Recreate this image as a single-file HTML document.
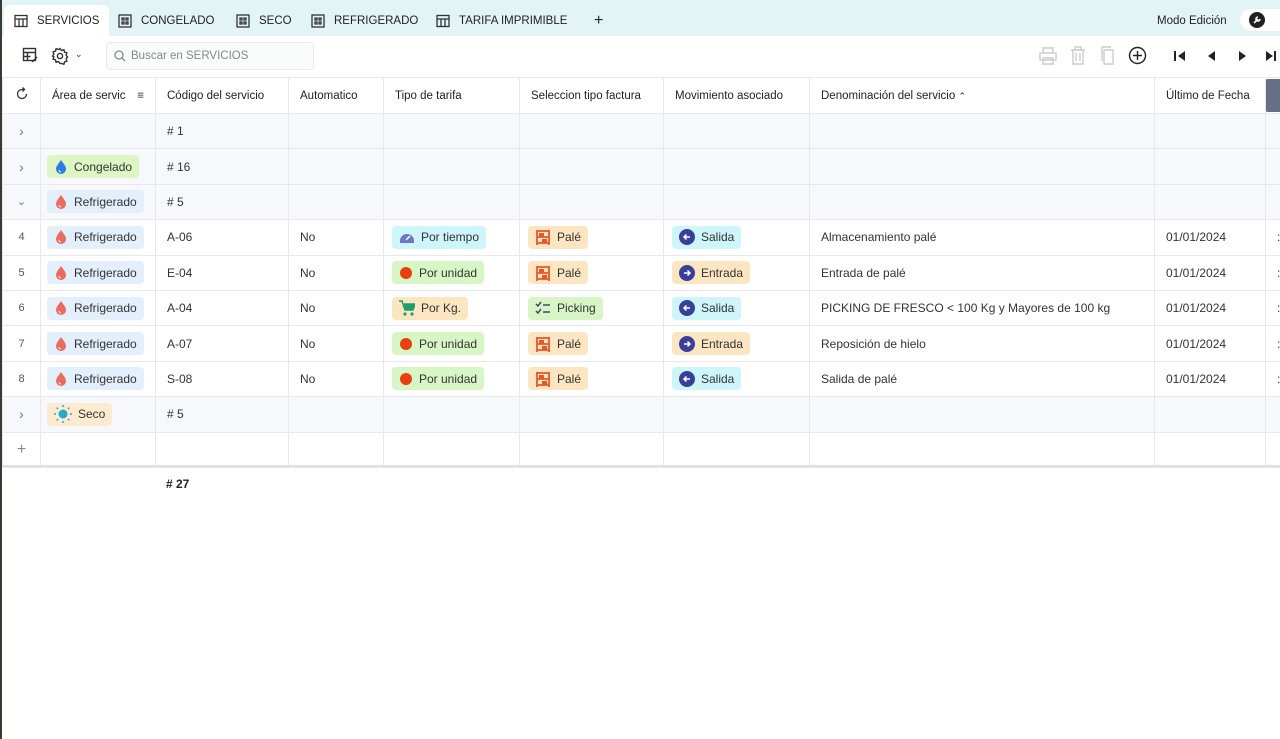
<!DOCTYPE html>
<html><head><meta charset="utf-8"><style>
*{box-sizing:border-box;margin:0;padding:0}
body{width:1280px;height:739px;overflow:hidden;background:#fff;font-family:"Liberation Sans",sans-serif;font-size:12px;color:#333;position:relative}
.tabs{position:absolute;left:0;top:0;width:1280px;height:36px;background:#e2f4f6}
.tab{position:absolute;top:5px;height:31px;display:flex;align-items:center;gap:9px;font-size:11.5px;color:#222}
.tab.active{background:#fff;border-radius:6px 6px 0 0;padding:0 10px;left:4px}
.lb{position:absolute;left:0;top:0;width:2px;height:739px;background:#3a3a30}
table{position:absolute;left:2px;top:77px;border-collapse:collapse;table-layout:fixed;width:1283px}
td{border:1px solid #e6e8eb;height:35.4px;padding:0 11px;white-space:nowrap;overflow:hidden;font-size:12px;color:#333}
tr.h td{height:36px;font-size:11.5px;color:#222}
tr.g td{background:#f6f8fb}
td.n{text-align:center;padding:0;color:#555;font-size:11px}
.p{display:inline-flex;align-items:center;gap:6px;height:23px;padding:0 7px;border-radius:4px;font-size:12px;color:#333;vertical-align:middle}
.p svg{flex:none}
.rf{background:#e3effa}.cg{background:#dcf7c4}.sc{background:#fdebd1}.cy{background:#cdf5fa}.gr{background:#d8f6c5}.or{background:#fce6c2}
</style></head><body>
<div class="tabs">
 <div class="tab active"><svg width="14" height="14" viewBox="0 0 14 14" fill="none" stroke="#333" stroke-width="1.3"><rect x="1" y="1.5" width="12" height="11"/><path d="M1 5h12M5 5v7.5M9 5v7.5"/></svg>SERVICIOS</div>
 <div class="tab" style="left:118px"><svg width="14" height="14" viewBox="0 0 14 14" fill="none" stroke="#333" stroke-width="1.3"><rect x="1" y="1" width="12" height="12"/><path d="M4 4h2v2H4zM8 4h2v2H8zM4 8h2v2H4zM8 8h2v2H8z"/></svg>CONGELADO</div>
 <div class="tab" style="left:236px"><svg width="14" height="14" viewBox="0 0 14 14" fill="none" stroke="#333" stroke-width="1.3"><rect x="1" y="1" width="12" height="12"/><path d="M4 4h2v2H4zM8 4h2v2H8zM4 8h2v2H4zM8 8h2v2H8z"/></svg>SECO</div>
 <div class="tab" style="left:311px"><svg width="14" height="14" viewBox="0 0 14 14" fill="none" stroke="#333" stroke-width="1.3"><rect x="1" y="1" width="12" height="12"/><path d="M4 4h2v2H4zM8 4h2v2H8zM4 8h2v2H4zM8 8h2v2H8z"/></svg>REFRIGERADO</div>
 <div class="tab" style="left:436px"><svg width="14" height="14" viewBox="0 0 14 14" fill="none" stroke="#333" stroke-width="1.3"><rect x="1" y="1.5" width="12" height="11"/><path d="M1 5h12M5 5v7.5M9 5v7.5"/></svg>TARIFA IMPRIMIBLE</div>
 <div class="tab" style="left:594px;font-size:16px">+</div>
 <div class="tab" style="left:1157px">Modo Edición</div>
 <div style="position:absolute;left:1240px;top:9px;width:40px;height:22px;background:#fff;border-radius:11px 0 0 11px"></div>
 <div style="position:absolute;left:1249px;top:12px;width:16px;height:16px;border-radius:50%;background:#222"></div>
 <svg style="position:absolute;left:1252px;top:15px" width="10" height="10" viewBox="0 0 10 10" fill="none" stroke="#fff" stroke-width="1.6"><path d="M2 8l4-4M6 2a2 2 0 1 0 2 2"/></svg>
</div>
<div class="lb"></div>
<svg style="position:absolute;left:22px;top:47px" width="17" height="17" viewBox="0 0 17 17" fill="none" stroke="#333" stroke-width="1.4"><rect x="1.5" y="1.5" width="12" height="12"/><path d="M1.5 5.5h12M1.5 9.5h7M5.5 5.5v8M10 15l5-5"/></svg>
<svg style="position:absolute;left:51px;top:47px" width="18" height="18" viewBox="0 0 18 18" fill="none" stroke="#333" stroke-width="1.4"><circle cx="9" cy="9" r="2.6"/><path d="M9 1.5l1.5 2 2.4-.8.6 2.4 2.4.7-.8 2.4 1.5 1.8-1.5 1.8.8 2.4-2.4.7-.6 2.4-2.4-.8L9 16.5l-1.5-2-2.4.8-.6-2.4-2.4-.7.8-2.4L1.5 9l1.4-1.8-.8-2.4 2.4-.7.6-2.4 2.4.8z"/></svg>
<div style="position:absolute;left:75px;top:49px;font-size:9px">⌄</div>
<div style="position:absolute;left:106px;top:42px;width:208px;height:28px;border:1px solid #e8eaec;border-radius:4px;background:#fafbfb;color:#888;font-size:11.5px;padding:7px 0 0 24px">Buscar en SERVICIOS</div>
<svg style="position:absolute;left:114px;top:50px" width="12" height="12" viewBox="0 0 12 12" fill="none" stroke="#888" stroke-width="1.3"><circle cx="5" cy="5" r="4"/><path d="M8 8l3 3"/></svg>
<svg style="position:absolute;left:1038px;top:47px" width="20" height="18" viewBox="0 0 20 18" fill="none" stroke="#ccc" stroke-width="1.4"><path d="M5 6V1h10v5M2 6h16v7H2zM5 11h10v6H5z"/></svg>
<svg style="position:absolute;left:1070px;top:46px" width="16" height="19" viewBox="0 0 16 19" fill="none" stroke="#ccc" stroke-width="1.4"><path d="M1 4h14M5 4V1h6v3M3 4v14h10V4M6 7v8M10 7v8"/></svg>
<svg style="position:absolute;left:1099px;top:46px" width="18" height="19" viewBox="0 0 18 19" fill="none" stroke="#ccc" stroke-width="1.4"><path d="M5 4h9v14H5zM3 15V1h9"/></svg>
<svg style="position:absolute;left:1128px;top:46px" width="19" height="19" viewBox="0 0 19 19" fill="none" stroke="#222" stroke-width="1.4"><circle cx="9.5" cy="9.5" r="8"/><path d="M9.5 5v9M5 9.5h9"/></svg>
<svg style="position:absolute;left:1173px;top:49px" width="14" height="14" viewBox="0 0 14 14" fill="#222"><rect x="1" y="2" width="2" height="10"/><path d="M12 2v10L5 7z"/></svg>
<svg style="position:absolute;left:1205px;top:49px" width="14" height="14" viewBox="0 0 14 14" fill="#222"><path d="M10 2v10L3 7z"/></svg>
<svg style="position:absolute;left:1235px;top:49px" width="14" height="14" viewBox="0 0 14 14" fill="#222"><path d="M4 2v10l7-5z"/></svg>
<svg style="position:absolute;left:1264px;top:49px" width="16" height="14" viewBox="0 0 16 14" fill="#222"><path d="M2 2v10l7-5z"/><rect x="10" y="2" width="2" height="10"/></svg>

<svg width="0" height="0" style="position:absolute"><defs>
<symbol id="drop" viewBox="0 0 14 16"><path d="M7 1C5 4 2 7 2 10a5 5 0 0 0 10 0C12 7 9 4 7 1z"/><path d="M5 11a2 2 0 0 0 2 2" stroke="#fff" stroke-width="1" fill="none"/></symbol>
<symbol id="sh" viewBox="0 0 16 16"><g fill="none" stroke="#e8572a" stroke-width="1.8"><path d="M2 1v15M14 1v15M2 2h12M2 8h12M2 14h12"/></g><rect x="4" y="4" width="5" height="4" fill="#e8572a"/><rect x="7" y="10" width="5" height="4" fill="#e8572a"/></symbol>
<symbol id="sal" viewBox="0 0 16 16"><circle cx="8" cy="8" r="8" fill="#3a3f9a"/><path d="M11 8H5M7.5 5.5L5 8l2.5 2.5" stroke="#fff" stroke-width="1.5" fill="none"/></symbol>
<symbol id="ent" viewBox="0 0 16 16"><circle cx="8" cy="8" r="8" fill="#3a3f9a"/><path d="M5 8h6M8.5 5.5L11 8l-2.5 2.5" stroke="#fff" stroke-width="1.5" fill="none"/></symbol>
<symbol id="dot" viewBox="0 0 14 14"><circle cx="7" cy="7" r="6" fill="#e8400f"/></symbol>
</defs></svg>

<table>
<colgroup><col style="width:38px"><col style="width:115px"><col style="width:133px"><col style="width:95px"><col style="width:136px"><col style="width:144px"><col style="width:146px"><col style="width:345px"><col style="width:111px"><col style="width:20px"></colgroup>
<tr class="h"><td class="n"><svg width="14" height="14" viewBox="0 0 14 14" fill="none" stroke="#333" stroke-width="1.3"><path d="M11.5 7A4.5 4.5 0 1 1 7 2.5h2M7.5 0.5L9.5 2.5 7.5 4.5"/></svg></td><td>Área de servic <span style="float:right">≡</span></td><td>Código del servicio</td><td>Automatico</td><td>Tipo de tarifa</td><td>Seleccion tipo factura</td><td>Movimiento asociado</td><td>Denominación del servicio <span style="font-size:9px">⌃</span></td><td>Último de Fecha</td><td style="padding:0"><div style="width:18px;height:33px;margin-left:-2px;background:#667085;border-radius:4px 0 0 4px"></div></td></tr>
<tr class="g"><td class="n" style="font-size:14px;color:#777">›</td><td></td><td># 1</td><td></td><td></td><td></td><td></td><td></td><td></td><td></td></tr>
<tr class="g"><td class="n" style="font-size:14px;color:#777">›</td><td style="padding-left:6px"><span class="p cg"><svg width="14" height="16" fill="#2f7be6"><use href="#drop"/></svg>Congelado</span></td><td># 16</td><td></td><td></td><td></td><td></td><td></td><td></td><td></td></tr>
<tr class="g"><td class="n" style="color:#777">⌄</td><td style="padding-left:6px"><span class="p rf"><svg width="14" height="16" fill="#ea6b5f"><use href="#drop"/></svg>Refrigerado</span></td><td># 5</td><td></td><td></td><td></td><td></td><td></td><td></td><td></td></tr>
<tr><td class="n">4</td><td style="padding-left:6px"><span class="p rf"><svg width="14" height="16" fill="#ea6b5f"><use href="#drop"/></svg>Refrigerado</span></td><td>A-06</td><td>No</td><td style="padding-left:8px"><span class="p cy"><svg width="16" height="14" viewBox="0 0 16 14"><path d="M1 11a7 7 0 0 1 14 0v2H1z" fill="#6b78c4"/><path d="M7 10l4-4" stroke="#fff" stroke-width="1.5"/></svg>Por tiempo</span></td><td style="padding-left:8px"><span class="p or"><svg width="16" height="16"><use href="#sh"/></svg>Palé</span></td><td style="padding-left:8px"><span class="p cy"><svg width="16" height="16"><use href="#sal"/></svg>Salida</span></td><td>Almacenamiento palé</td><td>01/01/2024</td><td>:</td></tr>
<tr><td class="n">5</td><td style="padding-left:6px"><span class="p rf"><svg width="14" height="16" fill="#ea6b5f"><use href="#drop"/></svg>Refrigerado</span></td><td>E-04</td><td>No</td><td style="padding-left:8px"><span class="p gr"><svg width="14" height="14"><use href="#dot"/></svg>Por unidad</span></td><td style="padding-left:8px"><span class="p or"><svg width="16" height="16"><use href="#sh"/></svg>Palé</span></td><td style="padding-left:8px"><span class="p or"><svg width="16" height="16"><use href="#ent"/></svg>Entrada</span></td><td>Entrada de palé</td><td>01/01/2024</td><td>:</td></tr>
<tr><td class="n">6</td><td style="padding-left:6px"><span class="p rf"><svg width="14" height="16" fill="#ea6b5f"><use href="#drop"/></svg>Refrigerado</span></td><td>A-04</td><td>No</td><td style="padding-left:8px"><span class="p or"><svg width="16" height="16" viewBox="0 0 16 16" fill="#1e9e6a"><path d="M0 1h3l3 9h8l2-6H5" stroke="#1e9e6a" stroke-width="1.5" fill="none"/><path d="M5 4h11l-2 6H6z"/><circle cx="6" cy="14" r="1.6"/><circle cx="13" cy="14" r="1.6"/></svg>Por Kg.</span></td><td style="padding-left:8px"><span class="p gr"><svg width="16" height="14" viewBox="0 0 16 14" fill="none" stroke="#3d4a6b" stroke-width="1.5"><path d="M1 3l2 2 3-4M1 10l2 2 3-4M8 4h7M8 11h7"/></svg>Picking</span></td><td style="padding-left:8px"><span class="p cy"><svg width="16" height="16"><use href="#sal"/></svg>Salida</span></td><td>PICKING DE FRESCO &lt; 100 Kg y Mayores de 100 kg</td><td>01/01/2024</td><td>:</td></tr>
<tr><td class="n">7</td><td style="padding-left:6px"><span class="p rf"><svg width="14" height="16" fill="#ea6b5f"><use href="#drop"/></svg>Refrigerado</span></td><td>A-07</td><td>No</td><td style="padding-left:8px"><span class="p gr"><svg width="14" height="14"><use href="#dot"/></svg>Por unidad</span></td><td style="padding-left:8px"><span class="p or"><svg width="16" height="16"><use href="#sh"/></svg>Palé</span></td><td style="padding-left:8px"><span class="p or"><svg width="16" height="16"><use href="#ent"/></svg>Entrada</span></td><td>Reposición de hielo</td><td>01/01/2024</td><td>:</td></tr>
<tr><td class="n">8</td><td style="padding-left:6px"><span class="p rf"><svg width="14" height="16" fill="#ea6b5f"><use href="#drop"/></svg>Refrigerado</span></td><td>S-08</td><td>No</td><td style="padding-left:8px"><span class="p gr"><svg width="14" height="14"><use href="#dot"/></svg>Por unidad</span></td><td style="padding-left:8px"><span class="p or"><svg width="16" height="16"><use href="#sh"/></svg>Palé</span></td><td style="padding-left:8px"><span class="p cy"><svg width="16" height="16"><use href="#sal"/></svg>Salida</span></td><td>Salida de palé</td><td>01/01/2024</td><td>:</td></tr>
<tr class="g"><td class="n" style="font-size:14px;color:#777">›</td><td style="padding-left:6px"><span class="p sc"><svg width="18" height="18" viewBox="0 0 18 18"><circle cx="9" cy="9" r="4.5" fill="#27a9c9"/><g stroke="#27a9c9" stroke-width="1.5"><path d="M9 0v2M9 16v2M0 9h2M16 9h2M2.6 2.6l1.4 1.4M14 14l1.4 1.4M2.6 15.4L4 14M14 4l1.4-1.4"/></g></svg>Seco</span></td><td># 5</td><td></td><td></td><td></td><td></td><td></td><td></td><td></td></tr>
<tr><td class="n" style="font-size:16px;color:#888">+</td><td></td><td></td><td></td><td></td><td></td><td></td><td></td><td></td><td></td></tr>
</table>
<div style="position:absolute;left:2px;top:465px;width:1278px;height:2px;background:#dde0e4"></div>
<div style="position:absolute;left:166px;top:477px;font-weight:bold;font-size:12px;color:#222"># 27</div>
</body></html>
